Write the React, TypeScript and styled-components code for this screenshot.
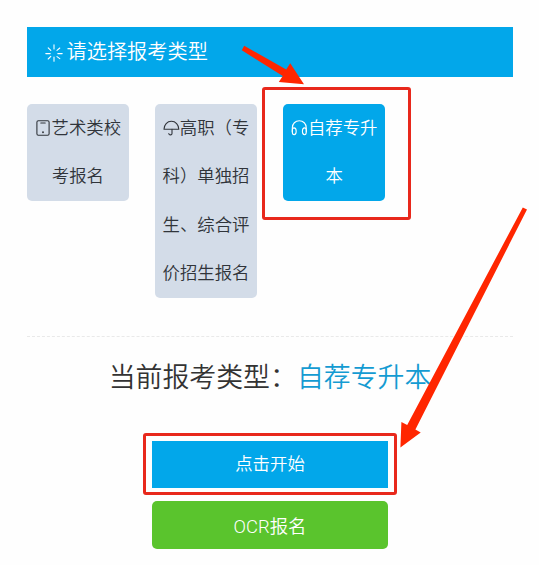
import type { ReactNode } from 'react'
import styled, { createGlobalStyle } from 'styled-components'

const TYPES = [
  { name: '艺术类校考报名', icon: 'phone' },
  { name: '高职（专科）单独招生、综合评价招生报名', icon: 'umbrella' },
  { name: '自荐专升本', icon: 'headphones', active: true },
]

const ICONS: Record<string, ReactNode> = {
  phone: (
    <>
      <rect x="1.9" y="1.8" width="12.2" height="14.4" rx="1.4" />
      <path d="M5.8 4h4.4" />
      <circle cx="8" cy="13.3" r="0.4" />
    </>
  ),
  umbrella: (
    <>
      <path d="M1 10.2C1.1 5.6 4.2 2.3 8.4 2.3s7.3 3.3 7.4 7.9z" />
      <path d="M9 10.2v4.2c0 1.9-3 2-3.2 0.1" />
    </>
  ),
  headphones: (
    <>
      <path d="M1.3 12.8V8.9C1.3 4.6 4.4 1.8 8.3 1.8s7 2.8 7 7.1v3.9" />
      <path d="M1.3 12.8c-.1-2.8.4-3.9 1.7-3.9 1.5 0 2.2 1.4 2.2 3.4s-.7 3.5-2.1 3.5c-1.2 0-1.8-1.2-1.8-3z" />
      <path d="M15.3 12.8c.1-2.8-.4-3.9-1.7-3.9-1.5 0-2.2 1.4-2.2 3.4s.7 3.5 2.1 3.5c1.2 0 1.8-1.2 1.8-3z" />
    </>
  ),
}

const App = () => {
  const current = TYPES.find((type) => type.active)
  return (
    <PAGE>
      <GlobalStyle />
      <HEADER>
        <SPINNER viewBox="0 0 18 18">
          <path d="M9 .8v4.2M9 13v4.2M.8 9.6h4.4M12.8 9.6h4.4M3.2 3.8l2.6 2.6M12 12.6l2.8 2M3.2 15l2.6-2.6M12 6.4l2.8-2.4" />
        </SPINNER>
        <h1>请选择报考类型</h1>
      </HEADER>
      <CARDS>
        {TYPES.map((type) => (
          <CARD key={type.icon} $active={type.active}>
            <LABEL>
              <ICON viewBox="0 0 17 18">{ICONS[type.icon]}</ICON>
              {type.name}
            </LABEL>
            {type.active && <MARK $top={-17} $right={-26} $bottom={-19} $left={-21} />}
          </CARD>
        ))}
      </CARDS>
      <CURRENT>
        当前报考类型：<span>{current?.name}</span>
      </CURRENT>
      <ACTIONS>
        <BUTTON $color="#02a7ea">
          点击开始
          <MARK $top={-8} $right={-9} $bottom={-7} $left={-9} />
        </BUTTON>
        <BUTTON $color="#5ac42d" $rounded>
          OCR报名
        </BUTTON>
      </ACTIONS>
      <ARROWS viewBox="0 0 539 565">
        <path d="M244.2 45.8L286.2 69.4L290.2 63.3L304 84.2L278.8 82L282.8 76L241.8 50.2z" />
        <path d="M522.8 207.4L527 209.4L415.4 429.5L420.7 432.4L400.4 447.4L401.4 422L407.2 425z" />
      </ARROWS>
    </PAGE>
  )
}

export default App

const GlobalStyle = createGlobalStyle`
  * {
    box-sizing: border-box;
  }

  body {
    margin: 0;
    background: #fefefe;
    font-family: 'Noto Sans CJK SC', sans-serif;
    font-weight: 350;
    text-spacing-trim: space-all;
  }
`

const PAGE = styled.main`
  position: relative;
  width: 539px;
  height: 565px;
  padding: 26.5px 26px 0 27px;
  overflow: hidden;
`

const HEADER = styled.header`
  display: flex;
  align-items: center;
  gap: 4px;
  height: 50px;
  padding-left: 17.5px;
  color: #fff;
  background: #02a7ea;

  h1 {
    margin: 0;
    font-size: 20.2px;
    font-weight: 350;
    line-height: 48px;
    padding-bottom: 2px;
  }
`

const SPINNER = styled.svg`
  width: 18px;
  height: 18px;
  margin-top: 3px;
  fill: none;
  stroke: currentColor;
  stroke-width: 1.1;
  stroke-linecap: round;
`

const CARDS = styled.section`
  display: flex;
  align-items: flex-start;
  gap: 26.5px;
  height: 260px;
  padding-top: 27.5px;
  border-bottom: 1px dashed #e9e9e9;
`

const CARD = styled.div<{ $active?: boolean }>`
  position: relative;
  width: 101.7px;
  padding: 0 7px;
  border-radius: 5px;
  color: ${({ $active }) => ($active ? '#fff' : '#30343a')};
  background: ${({ $active }) => ($active ? '#02a7ea' : '#d3dce8')};
  font-size: 17.4px;
  line-height: 48.4px;
  text-align: center;
`

const LABEL = styled.div`
  margin-top: -1px;
  padding-bottom: 1px;
`

const ICON = styled.svg`
  width: 17px;
  height: 18px;
  vertical-align: -3px;
  fill: none;
  stroke: currentColor;
  stroke-width: 1.1;
  stroke-linecap: round;
  stroke-linejoin: round;
`

// red frame drawn around the thing to click
const MARK = styled.i<{ $top: number; $right: number; $bottom: number; $left: number }>`
  position: absolute;
  top: ${({ $top }) => $top}px;
  right: ${({ $right }) => $right}px;
  bottom: ${({ $bottom }) => $bottom}px;
  left: ${({ $left }) => $left}px;
  border: 3px solid #e8281c;
  border-radius: 3px;
`

const CURRENT = styled.h2`
  margin: 19px 0 0;
  color: #333;
  font-size: 26.9px;
  font-weight: 350;
  line-height: 40px;
  text-align: center;

  span {
    color: #149bd2;
  }
`

const ACTIONS = styled.section`
  display: grid;
  justify-content: center;
  gap: 13px;
  margin-top: 45px;
`

const BUTTON = styled.button<{ $color: string; $rounded?: boolean }>`
  position: relative;
  width: 236px;
  height: 47.5px;
  padding: ${({ $rounded }) => ($rounded ? '0' : '0 0 3px')};
  border: none;
  border-radius: ${({ $rounded }) => ($rounded ? '5px' : '0')};
  color: #fff;
  background: ${({ $color }) => $color};
  font-family: ${({ $rounded }) => ($rounded ? "Roboto, 'Noto Sans CJK SC'" : "'Noto Sans CJK SC'")}, sans-serif;
  font-size: ${({ $rounded }) => ($rounded ? '18.4px' : '17.4px')};
  font-weight: 350;
`

const ARROWS = styled.svg`
  position: absolute;
  top: 0;
  left: 0;
  width: 539px;
  height: 565px;
  fill: #ff2600;
  pointer-events: none;
`
